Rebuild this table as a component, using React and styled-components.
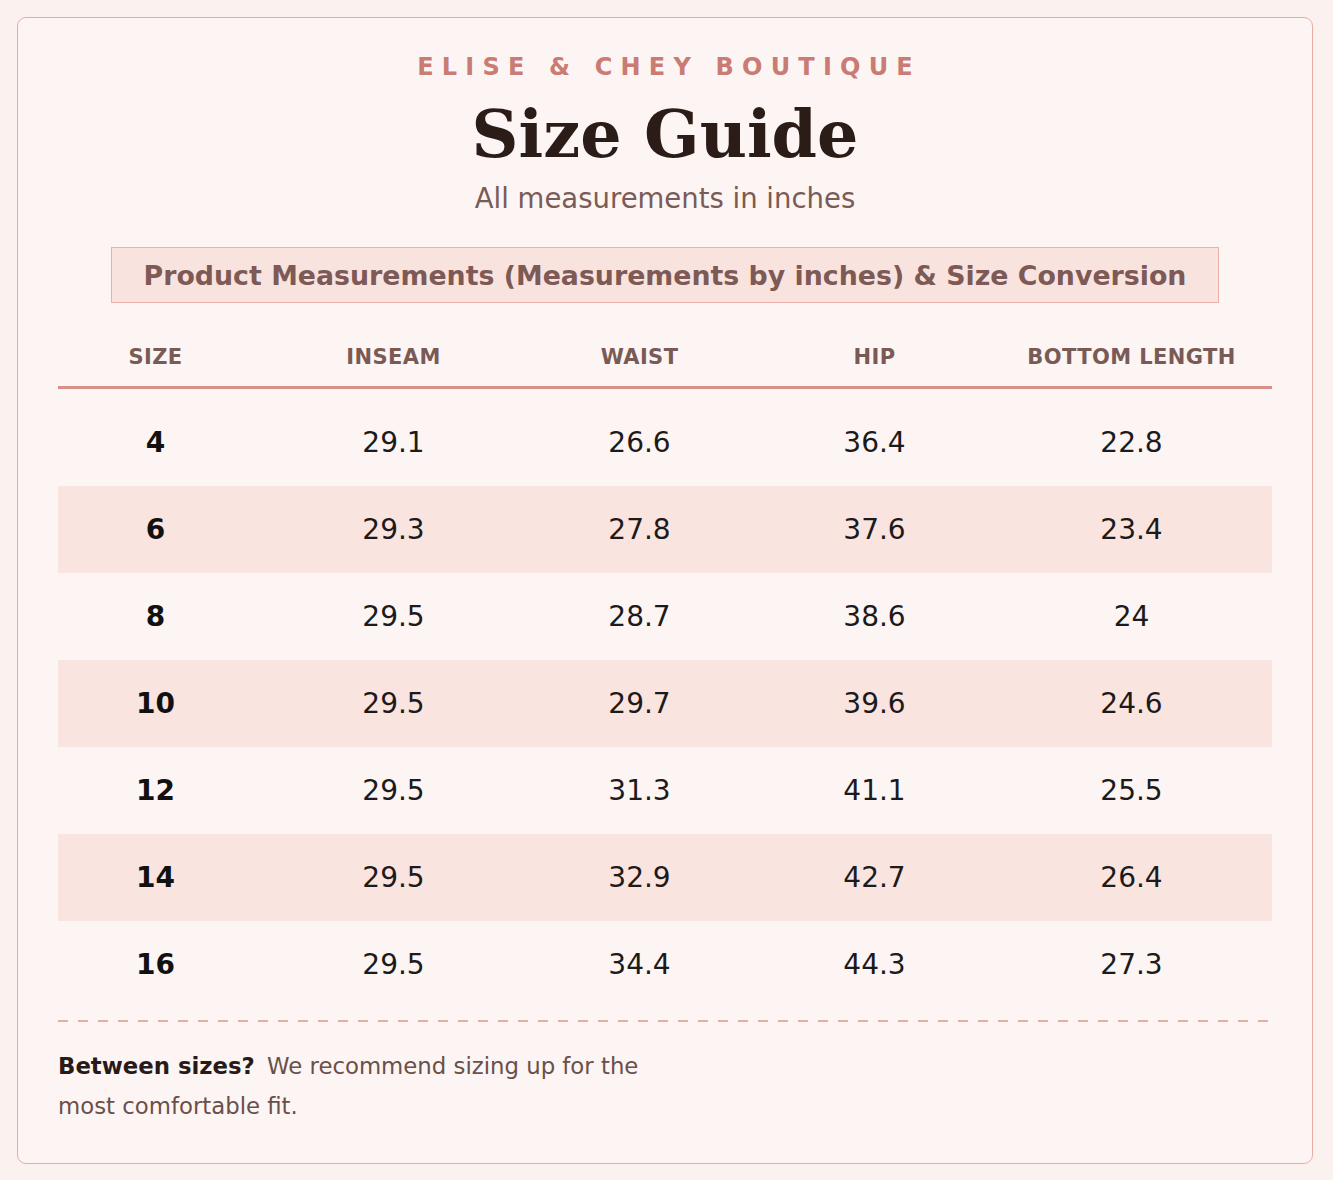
import React from "react";
import styled, { createGlobalStyle } from "styled-components";

const GlobalStyle = createGlobalStyle`
  html, body { margin: 0; padding: 0; background: #fbf2ef; }
  body { font-family: "DejaVu Sans", "Liberation Sans", sans-serif; }
  * { box-sizing: border-box; }
`;

const Page = styled.div`
  padding: 17px 20px 17px 17px;
`;

const Card = styled.section`
  background: #fcf5f3;
  border: 1.5px solid #e8aca4;
  border-radius: 9px;
  padding: 35px 40px 37px;
`;

const Header = styled.header`
  display: flex;
  flex-direction: column;
  align-items: center;
  text-align: center;
`;

const Brand = styled.div`
  font-size: 24px;
  line-height: 28px;
  font-weight: 700;
  letter-spacing: 8.2px;
  margin-right: -8.2px;
  color: #c97b74;
`;

const Title = styled.h1`
  margin: 17px 0 0;
  font-family: "DejaVu Serif", "Liberation Serif", serif;
  font-size: 65px;
  line-height: 72px;
  font-weight: 700;
  color: #2b1c18;
`;

const Subtitle = styled.p`
  margin: 12px 0 0;
  font-size: 27.5px;
  line-height: 32px;
  color: #7a5b56;
`;

const Banner = styled.div`
  margin: 33px auto 0;
  width: fit-content;
  padding: 12.5px 32px;
  background: #f9e3df;
  border: 1px solid #ebb1a9;
  font-size: 26.8px;
  line-height: 29px;
  font-weight: 700;
  color: #7d5a55;
`;

const Table = styled.div`
  margin-top: 25px;
`;

const Row = styled.div`
  display: grid;
  grid-template-columns: 195px 281px 211px 259px 1fr;
  align-items: center;
  background: ${(p) => (p.$striped ? "#f9e4e0" : "transparent")};
  height: ${(p) => (p.$head ? "auto" : "87px")};
  padding: ${(p) => (p.$head ? "18px 0" : "0")};
  border-bottom: ${(p) => (p.$head ? "3px solid #d98f88" : "none")};
`;

const HeadCell = styled.div`
  text-align: center;
  font-size: 21px;
  line-height: 22px;
  font-weight: 700;
  letter-spacing: 0.4px;
  color: #7a5a55;
  &:last-child { padding-right: 13px; }
`;

const Cell = styled.div`
  text-align: center;
  font-size: 28px;
  line-height: 30px;
  font-weight: ${(p) => (p.$bold ? 700 : 400)};
  color: ${(p) => (p.$bold ? "#111" : "#1c1a1a")};
  &:last-child { padding-right: 13px; }
`;

const Body = styled.div`
  margin-top: 10px;
`;

const Divider = styled.div`
  margin-top: 12px;
  height: 2px;
  background: repeating-linear-gradient(
    to right,
    #e9aca4 0 10px,
    transparent 10px 20px
  );
`;

const Note = styled.p`
  margin: 24px 0 0;
  max-width: 620px;
  font-size: 22.8px;
  line-height: 40px;
  color: #6b4f4a;
`;

const NoteLead = styled.strong`
  color: #2a1a17;
  font-weight: 700;
  margin-right: 5px;
`;

const columns = ["SIZE", "INSEAM", "WAIST", "HIP", "BOTTOM LENGTH"];
const rows = [
  ["4", "29.1", "26.6", "36.4", "22.8"],
  ["6", "29.3", "27.8", "37.6", "23.4"],
  ["8", "29.5", "28.7", "38.6", "24"],
  ["10", "29.5", "29.7", "39.6", "24.6"],
  ["12", "29.5", "31.3", "41.1", "25.5"],
  ["14", "29.5", "32.9", "42.7", "26.4"],
  ["16", "29.5", "34.4", "44.3", "27.3"],
];

export default function App() {
  return (
    <>
      <GlobalStyle />
      <Page>
        <Card>
          <Header>
            <Brand>ELISE &amp; CHEY BOUTIQUE</Brand>
            <Title>Size Guide</Title>
            <Subtitle>All measurements in inches</Subtitle>
          </Header>
          <Banner>
            Product Measurements (Measurements by inches) &amp; Size Conversion
          </Banner>
          <Table>
            <Row $head>
              {columns.map((c) => (
                <HeadCell key={c}>{c}</HeadCell>
              ))}
            </Row>
            <Body>
              {rows.map((r, i) => (
                <Row key={r[0]} $striped={i % 2 === 1}>
                  {r.map((v, j) => (
                    <Cell key={j} $bold={j === 0}>
                      {v}
                    </Cell>
                  ))}
                </Row>
              ))}
            </Body>
          </Table>
          <Divider />
          <Note>
            <NoteLead>Between sizes?</NoteLead> We recommend sizing up for the
            most comfortable fit.
          </Note>
        </Card>
      </Page>
    </>
  );
}
